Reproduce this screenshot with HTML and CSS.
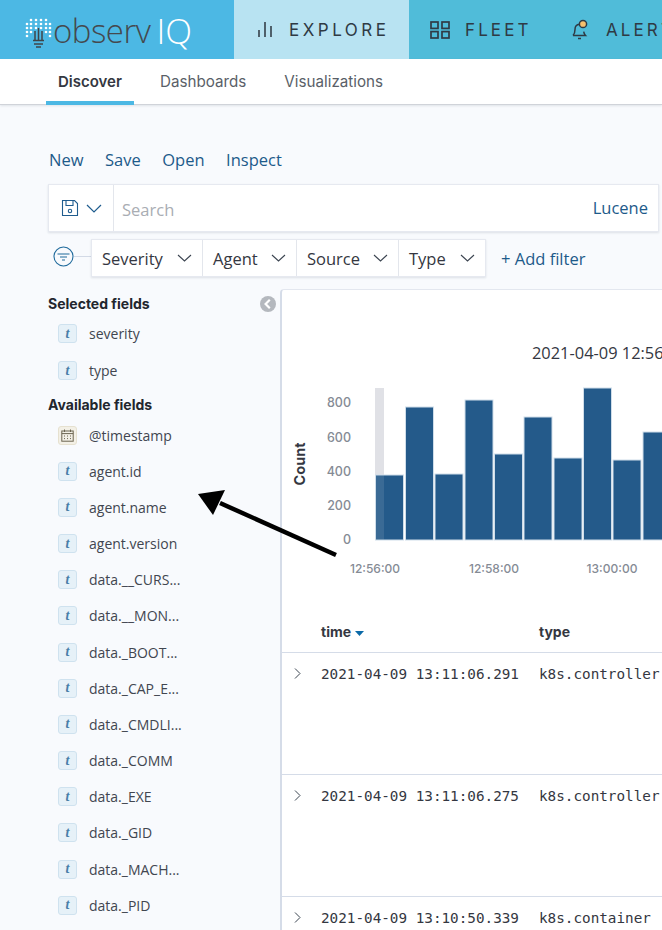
FILE: index.html
```html
<!DOCTYPE html>
<html lang="en">
<head>
<meta charset="utf-8">
<title>observIQ Explore</title>
<link rel="stylesheet" href="styles.css">
</head>
<body>
<div class="page">
  <header class="topbar">
    <div class="brand">
      <svg class="brand-mark" width="28" height="44" viewBox="0 0 28 44">
        <g fill="#fff">
          <circle cx="7" cy="14" r="1.3"/><circle cx="12" cy="14" r="1.3"/><circle cx="17" cy="14" r="1.3"/><circle cx="22" cy="14" r="1.3"/>
          <circle cx="3" cy="18" r="1.3"/><circle cx="7" cy="18" r="1.3"/><circle cx="12" cy="18" r="1.3"/><circle cx="17" cy="18" r="1.3"/><circle cx="22" cy="18" r="1.3"/><circle cx="26" cy="18" r="1.3"/>
          <circle cx="3" cy="22" r="1.3"/><circle cx="7" cy="22" r="1.3"/><circle cx="12" cy="22" r="1.3"/><circle cx="17" cy="22" r="1.3"/><circle cx="22" cy="22" r="1.3"/><circle cx="26" cy="22" r="1.3"/>
          <circle cx="3" cy="26" r="1.3"/><circle cx="7" cy="26" r="1.3"/><circle cx="22" cy="26" r="1.3"/><circle cx="26" cy="26" r="1.3"/>
          <circle cx="3" cy="30" r="1.3"/><circle cx="26" cy="30" r="1.3"/>
        </g>
        <g stroke="#3f4448" stroke-width="1.5" fill="none">
          <path d="M11 25v9M14.5 22v12M18 25v9"/>
          <path d="M9 34.5h11M10 38h9M12 41h5"/>
        </g>
      </svg>
      <span class="brand-name">observ</span><span class="brand-iq">IQ</span>
    </div>
    <a class="nav-item nav-explore">
      <svg width="16" height="18" viewBox="0 0 16 18" fill="none" stroke="#35404a" stroke-width="1.6"><path d="M2 9v7M8 1v15M14 5v11"/></svg>
      <span>EXPLORE</span>
    </a>
    <a class="nav-item nav-fleet">
      <svg width="20" height="18" viewBox="0 0 20 18" fill="none" stroke="#2f3a44" stroke-width="1.7"><rect x="1" y="1" width="7" height="6.4"/><rect x="12" y="1" width="7" height="6.4"/><rect x="1" y="10.6" width="7" height="6.4"/><rect x="12" y="10.6" width="7" height="6.4"/></svg>
      <span>FLEET</span>
    </a>
    <a class="nav-item nav-alerts">
      <svg width="18" height="22" viewBox="0 0 18 22" fill="none" stroke="#2f3a44" stroke-width="1.5"><path d="M2 16.5c1.6-1.6 2-3 2-6 0-3 1.8-5 4.5-5.2M2 16.5h12.5c-1-1-1.6-2-1.8-3.8"/><path d="M7 19.5h3"/><circle cx="12" cy="5" r="3.6" fill="#f6c06e"/></svg>
      <span>ALERTS</span>
    </a>
  </header>

  <nav class="subnav">
    <a class="tab tab-active">Discover</a>
    <a class="tab tab-dash">Dashboards</a>
    <a class="tab">Visualizations</a>
  </nav>

  <section class="toolbar">
    <a>New</a><a>Save</a><a>Open</a><a>Inspect</a>
  </section>

  <section class="searchbar">
    <div class="saved">
      <svg width="18" height="18" viewBox="0 0 18 18" fill="none" stroke="#1f5c8e" stroke-width="1.1"><path d="M1.5 1.5h12l3 3v12h-15z"/><path d="M5 1.5v5h7v-5"/><circle cx="9" cy="12" r="1.7"/></svg>
      <svg width="16" height="9" viewBox="0 0 16 9" fill="none" stroke="#1f5c8e" stroke-width="1.2"><path d="M1 1l7 7 7-7"/></svg>
    </div>
    <div class="search-placeholder">Search</div>
    <a class="lucene">Lucene</a>
  </section>

  <section class="filterbar">
    <svg class="filter-icon" width="21" height="21" viewBox="0 0 21 21" fill="none" stroke="#1f6a9c" stroke-width="1.1"><circle cx="10.5" cy="10.5" r="9.5"/><path d="M4.5 8h12M7 11h7M9 14h3"/></svg>
    <span class="filter-line"></span>
    <div class="filters">
      <div class="filter f-sev"><span>Severity</span><svg width="15" height="8" viewBox="0 0 15 8" fill="none" stroke="#3b4450" stroke-width="1.1"><path d="M1 1l6.5 6L14 1"/></svg></div>
      <div class="filter f-agent"><span>Agent</span><svg width="15" height="8" viewBox="0 0 15 8" fill="none" stroke="#3b4450" stroke-width="1.1"><path d="M1 1l6.5 6L14 1"/></svg></div>
      <div class="filter f-source"><span>Source</span><svg width="15" height="8" viewBox="0 0 15 8" fill="none" stroke="#3b4450" stroke-width="1.1"><path d="M1 1l6.5 6L14 1"/></svg></div>
      <div class="filter f-type"><span>Type</span><svg width="15" height="8" viewBox="0 0 15 8" fill="none" stroke="#3b4450" stroke-width="1.1"><path d="M1 1l6.5 6L14 1"/></svg></div>
    </div>
    <a class="add-filter">+ Add filter</a>
  </section>

  <div class="workspace">
    <aside class="sidebar">
      <div class="collapse"><svg width="16" height="16" viewBox="0 0 16 16"><circle cx="8" cy="8" r="8" fill="#b4b8be"/><path d="M9.8 3.8L5.6 8l4.2 4.2" fill="none" stroke="#fff" stroke-width="2.2"/></svg></div>
      <h3 class="side-title">Selected fields</h3>
      <ul class="fields">
        <li><i class="t">t</i>severity</li>
        <li><i class="t">t</i>type</li>
      </ul>
      <h3 class="side-title side-title-2">Available fields</h3>
      <ul class="fields fields-tight">
        <li><i class="cal"><svg width="13" height="13" viewBox="0 0 13 13" fill="none" stroke="#6b6450" stroke-width="1"><rect x=".8" y="2" width="11.4" height="10.2"/><path d="M.8 4.6h11.4M3.5 .5v2.5M9.5 .5v2.5" /><path d="M3 7h1M6 7h1M9 7h1M3 9.6h1M6 9.6h1M9 9.6h1"/></svg></i>@timestamp</li>
        <li><i class="t">t</i>agent.id</li>
        <li><i class="t">t</i>agent.name</li>
        <li><i class="t">t</i>agent.version</li>
        <li><i class="t">t</i>data.__CURS...</li>
        <li><i class="t">t</i>data.__MON...</li>
        <li><i class="t">t</i>data._BOOT...</li>
        <li><i class="t">t</i>data._CAP_E...</li>
        <li><i class="t">t</i>data._CMDLI...</li>
        <li><i class="t">t</i>data._COMM</li>
        <li><i class="t">t</i>data._EXE</li>
        <li><i class="t">t</i>data._GID</li>
        <li><i class="t">t</i>data._MACH...</li>
        <li><i class="t">t</i>data._PID</li>
      </ul>
    </aside>

    <main class="panel">
      <div class="chart-title">2021-04-09 12:56:00.000 - 13:11:00.000</div>
      <svg class="chart" width="380" height="250" viewBox="282 340 380 250">
        <rect x="375" y="388" width="9" height="152" fill="#e0e1e6"/>
        <g fill="#245a8a" stroke="#cfdde9" stroke-width="1">
          <rect x="375.5" y="475" width="28" height="65"/>
          <rect x="405.5" y="407" width="28" height="133"/>
          <rect x="435" y="474" width="28" height="66"/>
          <rect x="465" y="400" width="28" height="140"/>
          <rect x="494.5" y="454" width="28" height="86"/>
          <rect x="524" y="417" width="28" height="123"/>
          <rect x="554" y="458" width="28" height="82"/>
          <rect x="583.5" y="388" width="28" height="152"/>
          <rect x="613" y="460" width="28" height="80"/>
          <rect x="643" y="432" width="28" height="108"/>
        </g>
        <rect x="376" y="475.5" width="8" height="64" fill="#fff" opacity=".1"/>
        <g class="axis-y" text-anchor="end">
          <text x="351" y="407">800</text>
          <text x="351" y="442">600</text>
          <text x="351" y="476">400</text>
          <text x="351" y="510">200</text>
          <text x="351" y="544">0</text>
        </g>
        <text class="axis-title" text-anchor="middle" transform="translate(305 464) rotate(-90)">Count</text>
        <g class="axis-x" text-anchor="middle">
          <text x="375" y="573">12:56:00</text>
          <text x="494" y="573">12:58:00</text>
          <text x="612" y="573">13:00:00</text>
        </g>
      </svg>
      <div class="table">
        <div class="row head">
          <div class="cell-x"></div>
          <div class="cell-time"><b>time</b><svg class="sort" width="9" height="5" viewBox="0 0 9 5"><path d="M0 0h9L4.5 5z" fill="#0b6aa8"/></svg></div>
          <div class="cell-type"><b>type</b></div>
        </div>
        <div class="row">
          <div class="cell-x"><svg width="7" height="11" viewBox="0 0 7 11" fill="none" stroke="#3b4450" stroke-width="1"><path d="M1 .5l5 5-5 5"/></svg></div>
          <div class="cell-time mono">2021-04-09 13:11:06.291</div>
          <div class="cell-type mono">k8s.controller</div>
        </div>
        <div class="row">
          <div class="cell-x"><svg width="7" height="11" viewBox="0 0 7 11" fill="none" stroke="#3b4450" stroke-width="1"><path d="M1 .5l5 5-5 5"/></svg></div>
          <div class="cell-time mono">2021-04-09 13:11:06.275</div>
          <div class="cell-type mono">k8s.controller</div>
        </div>
        <div class="row">
          <div class="cell-x"><svg width="7" height="11" viewBox="0 0 7 11" fill="none" stroke="#3b4450" stroke-width="1"><path d="M1 .5l5 5-5 5"/></svg></div>
          <div class="cell-time mono">2021-04-09 13:10:50.339</div>
          <div class="cell-type mono">k8s.container</div>
        </div>
      </div>
    </main>
  </div>

  <svg class="arrow" width="150" height="75" viewBox="0 0 150 75"><path d="M138 65L22 13" stroke="#000" stroke-width="4.5" fill="none"/><path d="M0 4L27 0 15 25z" fill="#000"/></svg>
</div>
</body>
</html>
```
FILE: styles.css
```css
* { box-sizing: border-box; }
html, body { margin: 0; padding: 0; height: 100%; overflow: hidden; }
body { font-family: "Open Sans", "Liberation Sans", sans-serif; background: #f8fafd; color: #343741; }
ul { list-style: none; margin: 0; padding: 0; }
h3 { margin: 0; }
.page { position: relative; width: 662px; height: 930px; overflow: hidden; }

.topbar { display: flex; height: 59px; background: #50bcd9; }
.brand { width: 234px; flex: none; background: #4cb8e4; display: flex; align-items: center; padding-left: 24px; position: relative; }
.brand-mark { flex: none; margin-top: -4px; }
.brand-name { font-family: "Open Sans", sans-serif; font-weight: 300; font-size: 33px; letter-spacing: -.5px; color: #45494e; margin-left: 1px; line-height: 1; margin-top: 2px; }
.brand-iq { font-family: "Open Sans", sans-serif; font-weight: 300; font-size: 35px; color: #fff; line-height: 1; margin-top: 2px; margin-left: 6px; }
.nav-item { display: flex; align-items: center; font-family: Inter, sans-serif; font-size: 17px; letter-spacing: 3.5px; color: #2f3a44; flex: none; }
.nav-explore { width: 175px; background: #b8e3f2; padding-left: 23px; gap: 16px; }
.nav-fleet { width: 138px; padding-left: 21px; gap: 15px; letter-spacing: 3.1px; }
.nav-alerts { padding-left: 24px; gap: 17px; letter-spacing: 3.1px; }

.subnav { height: 46px; background: #fff; display: flex; padding-left: 46px; border-bottom: 1px solid #d0d3d9; box-shadow: 0 1px 2px rgba(60,70,90,.12); font-family: Inter, sans-serif; font-size: 15.2px; color: #5a5f68; }
.tab { display: flex; align-items: center; height: 46px; padding: 0 12px 1px; margin-right: 14px; }
.tab-active { color: #343741; font-weight: 600; font-size: 15px; border-bottom: 4px solid #4cb8e4; padding-top: 3px; width: 88px; margin-right: 14px; }
.tab-dash { margin-right: 14px; }

.toolbar { display: flex; gap: 21.5px; padding: 45px 0 0 49px; font-size: 16.5px; line-height: 20px; color: #1d5a8a; }

.searchbar { margin: 14px 3px 0 48px; height: 48px; background: #fff; display: flex; align-items: center; border: 1px solid #e6e9f0; box-shadow: 0 1px 2px rgba(60,70,90,.14); }
.saved { width: 65px; height: 100%; display: flex; align-items: center; gap: 7px; padding-left: 12px; border-right: 1px solid #e3e6ec; flex: none; }
.search-placeholder { flex: 1; padding: 3px 0 0 8px; color: #a9adb3; font-size: 16.5px; }
.lucene { color: #1d5a8a; font-size: 16.5px; padding: 0 10px 0 0; margin-top: -1px; }

.filterbar { display: flex; align-items: center; height: 38px; margin-top: 7px; padding-left: 53px; }
.filter-icon { flex: none; margin-top: -3px; }
.filter-line { width: 17px; height: 1px; background: #d3dae6; margin-top: -3px; flex: none; }
.filters { display: flex; height: 38px; background: #fff; border: 1px solid #e6e9f0; box-shadow: 0 1px 2px rgba(60,70,90,.14); margin-right: 15px; }
.filter { display: flex; align-items: center; justify-content: space-between; padding: 0 10px; font-size: 16.5px; color: #343741; border-right: 1px solid #e3e6ec; }
.filter:last-child { border-right: 0; }
.f-sev { width: 111px; }
.f-agent { width: 94px; }
.f-source { width: 102px; }
.f-type { width: 86px; }
.add-filter { font-size: 16.5px; color: #1d5a8a; }

.workspace { display: flex; margin-top: 12px; }
.sidebar { width: 280px; flex: none; position: relative; padding-left: 48px; font-size: 14px; }
.collapse { position: absolute; left: 260px; top: 7px; height: 16px; }
.side-title { font-family: Inter, sans-serif; font-weight: 700; font-size: 14px; color: #22262e; height: 26px; line-height: 30px; }
.side-title-2 { height: 28px; line-height: 32px; }
.fields { padding-left: 10px; }
.fields li { display: flex; align-items: center; height: 37px; color: #414650; }
.fields-tight li { height: 36.18px; }
.t, .cal { width: 19px; height: 19px; flex: none; margin-right: 12px; display: flex; align-items: center; justify-content: center; border-radius: 3px; }
.t { background: #e6f1f8; border: 1px solid #cfe2ef; color: #4a7ea8; font-family: "Liberation Serif", serif; font-weight: 700; font-size: 14px; font-style: italic; }
.cal { background: #f3f0e6; border: 1px solid #e6e1d0; font-style: normal; }

.panel { flex: 1; min-width: 0; background: #fff; border-left: 2px solid #d5dce8; border-top: 1px solid #e3e7ef; border-top-left-radius: 4px; overflow: hidden; }
.chart-title { white-space: nowrap; font-size: 16.4px; line-height: 22px; padding: 52px 0 0 250px; color: #343741; height: 74px; }
.chart { display: block; margin-top: -24px; }
.chart text { font-family: Inter, sans-serif; font-size: 12px; }
.axis-y text, .axis-x text { fill: #858b95; font-weight: 500; }
.axis-y text { font-size: 12.5px; }
.chart .axis-title { font-weight: 700; font-size: 14.5px; fill: #343741; }

.table { margin-top: 21px; }
.row { display: grid; grid-template-columns: 39px 218px 1fr; height: 122px; border-bottom: 1px solid #d5dce8; padding-top: 11px; font-size: 14px; white-space: nowrap; }
.row.head { height: 42px; padding-top: 11px; color: #343741; }
.row.head b { font-family: Inter, sans-serif; font-size: 14px; font-weight: 700; }
.cell-x { padding: 4px 0 0 12px; }
.cell-x svg { display: block; }
.mono { font-family: "DejaVu Sans Mono", "Liberation Mono", monospace; font-size: 14.3px; color: #343741; line-height: 20px; }
.sort { margin-left: 4px; vertical-align: middle; }

.arrow { position: absolute; left: 198px; top: 490px; }
```
